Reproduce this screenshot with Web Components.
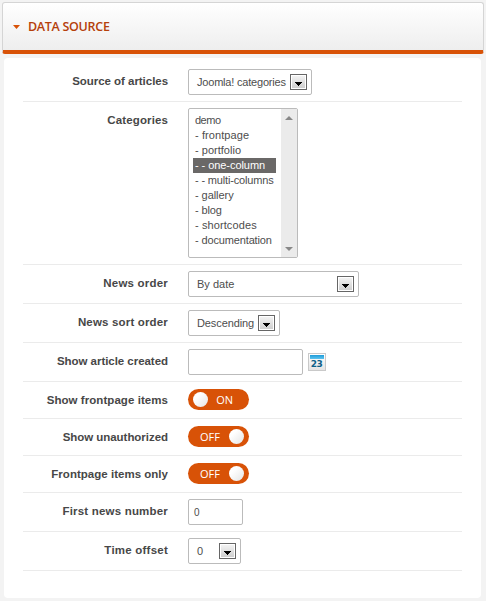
<!DOCTYPE html>
<html lang="en">
<head>
<meta charset="utf-8">
<title>Data source</title>
<style>
html,body{margin:0;padding:0}
body{width:486px;height:601px;overflow:hidden;background:#f3f3f3;font-family:"Liberation Sans",Arial,sans-serif;font-size:11px;color:#4d4d4d}
</style>
</head>
<body>
<settings-page>
  <panel-header>DATA SOURCE</panel-header>
  <settings-panel>
    <setting-row label="Source of articles" style="--label-ls:-.04px"><select-box style="--w:124px;--ls:-.2px">Joomla! categories</select-box></setting-row>
    <setting-row label="Categories" style="--label-ls:.12px"><list-box>
      <list-item style="--ls:-.5px">demo</list-item>
      <list-item style="--ls:.09px">- frontpage</list-item>
      <list-item style="--ls:.02px">- portfolio</list-item>
      <list-item selected style="--ls:-.06px">- - one-column</list-item>
      <list-item style="--ls:-.16px">- - multi-columns</list-item>
      <list-item style="--ls:-.06px">- gallery</list-item>
      <list-item style="--ls:-.12px">- blog</list-item>
      <list-item style="--ls:.1px">- shortcodes</list-item>
      <list-item style="--ls:-.14px">- documentation</list-item>
    </list-box></setting-row>
    <setting-row label="News order" style="--label-ls:.21px"><select-box style="--w:171px">By date</select-box></setting-row>
    <setting-row label="News sort order" style="--label-ls:.17px"><select-box style="--w:92px;--ls:-.1px">Descending</select-box></setting-row>
    <setting-row label="Show article created" style="--label-ls:-.04px"><text-box style="--w:115px"></text-box><calendar-icon></calendar-icon></setting-row>
    <setting-row label="Show frontpage items" compact style="--label-ls:.06px"><toggle-switch on>ON</toggle-switch></setting-row>
    <setting-row label="Show unauthorized" compact style="--label-ls:-.04px"><toggle-switch>OFF</toggle-switch></setting-row>
    <setting-row label="Frontpage items only" compact style="--label-ls:.02px"><toggle-switch>OFF</toggle-switch></setting-row>
    <setting-row label="First news number" style="--label-ls:.19px"><text-box style="--w:55px">0</text-box></setting-row>
    <setting-row label="Time offset" style="--label-ls:.23px"><select-box style="--w:53px">0</select-box></setting-row>
  </settings-panel>
</settings-page>
<script>
function define(name, html, setup) {
  const tpl = document.createElement('template');
  tpl.innerHTML = html;
  customElements.define(name, class extends HTMLElement {
    constructor() {
      super();
      this.attachShadow({mode: 'open'}).append(tpl.content.cloneNode(true));
      if (setup) setup(this);
    }
  });
}

define('settings-page', `<style>
:host{display:flex;flex-direction:column;gap:4px;box-sizing:border-box;padding:2px 2px 0;height:601px}
</style><slot></slot>`);

define('panel-header', `<style>
:host{display:flex;align-items:center;box-sizing:border-box;width:482px;height:52px;border:1px solid #d5d5d5;border-bottom:4px solid #d85207;border-radius:3px;
background:linear-gradient(#fff,#eee);padding:0 0 0 10px;gap:8px;color:#b5400b;font:600 12.5px "Open Sans",sans-serif}
svg{display:block;width:7px;height:4px}
span{white-space:nowrap;letter-spacing:-.3px}
</style><svg viewBox="0 0 7 4"><path d="M0 0h7L3.5 4z" fill="#d85207"/></svg><span><slot></slot></span>`);

define('settings-panel', `<style>
:host{display:block;box-sizing:border-box;width:477px;height:540px;margin-left:2px;padding:5px 19px 0;background:#fff;border-radius:4px}
</style><slot></slot>`);

define('setting-row', `<style>
:host{display:grid;grid-template-columns:145px 1fr;column-gap:20px;padding:6px 0;border-bottom:1px solid #ebebeb}
:host([compact]){padding:7px 0 8px}
.label{text-align:right;font-weight:bold;font-size:11.5px;line-height:14px;padding-top:5px;height:14px;white-space:nowrap;color:#474747;letter-spacing:var(--label-ls,0)}
:host([compact]) .label{padding-top:4px;margin-bottom:-4px}
.field{display:flex;align-items:center;gap:5px}
</style><div class="label"></div><div class="field"><slot></slot></div>`,
el => { el.shadowRoot.querySelector('.label').textContent = el.getAttribute('label'); });

define('select-box', `<style>
:host{display:flex;align-items:center;justify-content:space-between;box-sizing:border-box;width:var(--w);height:26px;border:1px solid #bbb;border-radius:2px;background:#fff;padding:0 4px 0 8px;white-space:nowrap}
span{letter-spacing:var(--ls,0)}
i{box-sizing:border-box;flex:none;width:17px;height:16px;border:1px solid #666;box-shadow:inset 0 0 0 1px #fff;background:linear-gradient(#f5f5f5,#ccc)}
svg{display:block;width:15px;height:14px}
</style><span><slot></slot></span><i><svg viewBox="0 0 15 14" shape-rendering="crispEdges"><path d="M4 7h7v1h-1v1h-1v1h-1v1h-1v-1h-1v-1h-1v-1h-1z"/></svg></i>`);

define('list-box', `<style>
:host{display:flex;box-sizing:border-box;width:110px;height:150px;border:1px solid #bbb;border-radius:2px;background:#fff}
.items{flex:1;min-width:0;padding:4px 5px 0 4px}
.bar{flex:none;width:16px;background:#ebebeb;display:flex;flex-direction:column;justify-content:space-between;align-items:center;padding:7px 0 6px;box-sizing:border-box}
svg{display:block;width:8px;height:4px}
</style><div class="items"><slot></slot></div><div class="bar"><svg viewBox="0 0 8 4"><path d="M0 4h8L4 0z" fill="#888"/></svg><svg viewBox="0 0 8 4"><path d="M0 0h8L4 4z" fill="#888"/></svg></div>`);

define('list-item', `<style>
:host{display:block;height:15px;line-height:15px;padding-left:2px;white-space:nowrap;letter-spacing:var(--ls,0)}
:host([selected]){background:#6a6867;color:#fff}
</style><slot></slot>`);

define('text-box', `<style>
:host{display:flex;align-items:center;box-sizing:border-box;width:var(--w);height:26px;border:1px solid #bbb;border-radius:2px;background:#fff;padding-left:5px;font-size:10px}
</style><slot></slot>`);

define('toggle-switch', `<style>
:host{display:flex;align-items:center;justify-content:space-between;box-sizing:border-box;width:61px;height:21px;border-radius:10.5px;background:#d85207;color:#fff;padding:0 5px 0 12px;font:11px "Open Sans",sans-serif}
:host([on]){flex-direction:row-reverse;padding:0 16px 0 5px}
i{width:15px;height:15px;border-radius:50%;background:linear-gradient(135deg,#fff 30%,#e4e4e4)}
</style><span><slot></slot></span><i></i>`);

define('calendar-icon', `<style>
:host{display:block;box-sizing:border-box;width:18px;height:18px;border:1px solid #c9c9c9;background:linear-gradient(#fff,#e4e4e4);padding:1px}
.top{height:4px;background:linear-gradient(#1e9bd8,#5cc3ee)}
.num{font:bold 9px/10px "DejaVu Sans",sans-serif;color:#0d6189;text-align:center;letter-spacing:-.6px;margin:0 -1px 0 -2px}
</style><div class="top"></div><div class="num">23</div>`);
</script>
</body>
</html>
